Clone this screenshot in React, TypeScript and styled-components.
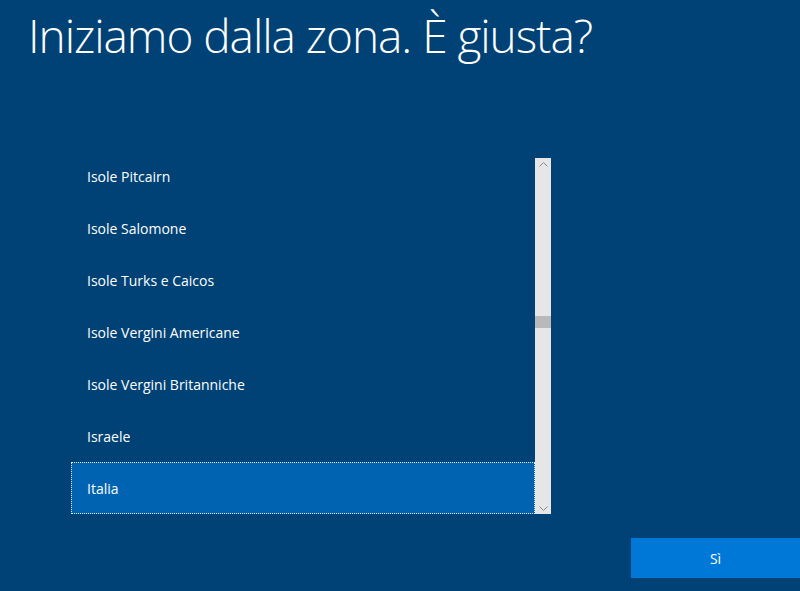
import { useLayoutEffect, useRef } from 'react';
import styled, { createGlobalStyle } from 'styled-components';

const regions = [
  'Isole Pitcairn',
  'Isole Salomone',
  'Isole Turks e Caicos',
  'Isole Vergini Americane',
  'Isole Vergini Britanniche',
  'Israele',
  'Italia',
];

const ROW = 52;
const SELECTED = 'Italia';

const App: React.FC = () => {
  const viewport = useRef<HTMLDivElement>(null);

  useLayoutEffect(() => {
    if (viewport.current) viewport.current.scrollTop = 8;
  }, []);

  return (
    <Page>
      <GlobalStyle />
      <Title>Iniziamo dalla zona. È giusta?</Title>
      <ListBox>
        <Viewport ref={viewport}>
          {regions.map(name =>
            <Item key={name} $selected={name === SELECTED}>{name}</Item>
          )}
        </Viewport>
        <ScrollBar>
          <Arrow>
            <svg width="9" height="5" viewBox="0 0 9 5">
              <path d="M0.5 4.5 L4.5 0.5 L8.5 4.5" fill="none" stroke="#8a8a8a" strokeWidth="1" />
            </svg>
          </Arrow>
          <Track>
            <Thumb />
          </Track>
          <Arrow>
            <svg width="9" height="5" viewBox="0 0 9 5">
              <path d="M0.5 0.5 L4.5 4.5 L8.5 0.5" fill="none" stroke="#8a8a8a" strokeWidth="1" />
            </svg>
          </Arrow>
        </ScrollBar>
      </ListBox>
      <Footer>
        <PrimaryButton>Sì</PrimaryButton>
      </Footer>
    </Page>
  );
};

const GlobalStyle = createGlobalStyle`
  html, body {
    margin: 0;
    padding: 0;
    background: #004275;
  }
`;

const Page = styled.div`
  display: flex;
  flex-direction: column;
  width: 800px;
  height: 591px;
  overflow: hidden;
  background: #004275;
  color: #fff;
  font-family: "Open Sans", "Noto Sans", sans-serif;
`;

const Title = styled.h1`
  margin: 0;
  padding: 4px 0 0 28px;
  font-size: 46px;
  font-weight: 300;
  line-height: 62px;
  letter-spacing: -1.05px;
`;

const ListBox = styled.div`
  display: flex;
  width: 480px;
  height: 356px;
  margin: 92px 0 0 71px;
`;

const Viewport = styled.div`
  flex: 1;
  overflow: hidden;
`;

const Item = styled.div<{ $selected?: boolean }>`
  display: flex;
  align-items: center;
  box-sizing: border-box;
  height: ${ROW}px;
  padding: 0 0 0 16px;
  font-size: 14px;
  background: ${p => p.$selected ? '#0063b1' : 'transparent'};
  outline: ${p => p.$selected ? '1px dotted #e8e8e8' : 'none'};
  outline-offset: -1px;
`;

const ScrollBar = styled.div`
  display: flex;
  flex-direction: column;
  width: 16px;
  background: #e6e6e6;
`;

const Arrow = styled.div`
  display: flex;
  align-items: center;
  justify-content: center;
  height: 12px;
`;

const Track = styled.div`
  flex: 1;
  padding-top: 146px;
`;

const Thumb = styled.div`
  height: 12px;
  background: #b9b9b9;
`;

const Footer = styled.div`
  display: flex;
  justify-content: flex-end;
  margin-top: 24px;
`;

const PrimaryButton = styled.button`
  width: 169px;
  height: 40px;
  border: none;
  padding: 0;
  background: #0078d7;
  color: #fff;
  font-family: "Open Sans", "Noto Sans", sans-serif;
  font-size: 14px;
`;

export default App;
